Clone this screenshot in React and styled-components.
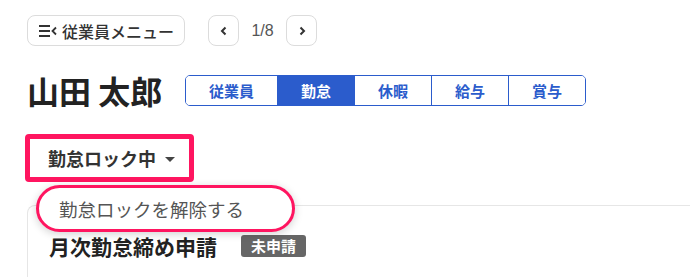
import React from 'react'
import styled, { createGlobalStyle } from 'styled-components'

const GlobalStyle = createGlobalStyle`
  body {
    margin: 0;
    background: #fff;
    font-family: "Noto Sans CJK JP", "Noto Sans", sans-serif;
    color: #333;
  }
`

const Page = styled.div`
  width: 690px;
  height: 277px;
  overflow: hidden;
  padding: 15px 0 0 27px;
  box-sizing: border-box;
`

const TopBar = styled.div`
  display: flex;
  align-items: center;
`

const MenuButton = styled.button`
  display: flex;
  align-items: center;
  gap: 4px;
  height: 31px;
  width: 158px;
  padding: 0 0 0 10px;
  border: 1px solid #dcdcdc;
  border-radius: 8px;
  background: #fff;
  font-family: inherit;
  font-size: 16px;
  font-weight: 500;
  color: #333;
  box-sizing: border-box;
  white-space: nowrap;
`

const Pager = styled.div`
  display: flex;
  align-items: center;
  margin-left: 23px;
`

const PageButton = styled.button`
  width: 31px;
  height: 31px;
  display: flex;
  align-items: center;
  justify-content: center;
  border: 1px solid #dcdcdc;
  border-radius: 8px;
  background: #fff;
  padding: 0;
  box-sizing: border-box;
`

const PageCount = styled.span`
  width: 47px;
  text-align: center;
  font-family: "Liberation Sans", sans-serif;
  font-size: 16px;
  color: #555;
`

const NameRow = styled.div`
  display: flex;
  align-items: center;
  margin-top: 27px;
`

const Name = styled.h1`
  margin: 0;
  font-size: 32px;
  font-weight: 700;
  color: #222;
  width: 158px;
  line-height: 34px;
  white-space: nowrap;
`

const Tabs = styled.div`
  display: flex;
  border: 1px solid #2b5ccc;
  border-radius: 5px;
  overflow: hidden;
  height: 31px;
  box-sizing: border-box;
`

const Tab = styled.div`
  padding: 0 23px;
  display: flex;
  align-items: center;
  justify-content: center;
  font-size: 15px;
  font-weight: 700;
  color: ${p => (p.active ? '#fff' : '#2b5ccc')};
  background: ${p => (p.active ? '#2b5ccc' : '#fff')};
  border-left: ${p => (p.first ? 'none' : '1px solid #2b5ccc')};
`

const LockArea = styled.div`
  position: relative;
  margin-top: 27px;
  margin-left: -2px;
`

const LockButton = styled.button`
  display: flex;
  align-items: center;
  gap: 9px;
  width: 169px;
  height: 48px;
  padding: 0 0 0 18px;
  border: 5px solid #ff1560;
  border-radius: 4px;
  background: #fff;
  font-family: inherit;
  font-size: 18px;
  font-weight: 700;
  color: #333;
  box-sizing: border-box;
`

const Caret = styled.span`
  width: 0;
  height: 0;
  border-left: 5px solid transparent;
  border-right: 5px solid transparent;
  border-top: 5px solid #444;
  margin-top: 2px;
`

const Menu = styled.div`
  position: absolute;
  left: 11px;
  top: 51px;
  width: 259px;
  height: 47px;
  display: flex;
  align-items: center;
  padding-left: 20px;
  box-sizing: border-box;
  border: 3px solid #ff1560;
  border-radius: 24px;
  background: #fff;
  box-shadow: 0 2px 8px rgba(0, 0, 0, 0.18);
  font-size: 18.5px;
  color: #555;
  z-index: 2;
`

const Card = styled.div`
  margin-top: 23px;
  border-top: 1px solid #e6e6e6;
  border-left: 1px solid #e6e6e6;
  border-top-left-radius: 8px;
  height: 80px;
  padding: 25px 0 0 21px;
  box-sizing: border-box;
  display: flex;
  align-items: flex-start;
  gap: 24px;
`

const CardTitle = styled.h2`
  margin: 0;
  font-size: 21px;
  font-weight: 700;
  color: #222;
  line-height: 30px;
`

const Badge = styled.span`
  margin-top: 4px;
  padding: 0 10px;
  height: 22px;
  line-height: 22px;
  border-radius: 3px;
  background: #666;
  color: #fff;
  font-size: 15px;
  font-weight: 700;
`

const FoldIcon = () => (
  <svg width="20" height="14" viewBox="0 0 20 14" fill="none" stroke="#333" strokeWidth="2">
    <path d="M1 2h11M1 7h11M1 12h11" />
    <path d="M18 3.5L14.5 7l3.5 3.5" strokeWidth="1.8" />
  </svg>
)

const Chevron = ({ dir }) => (
  <svg width="10" height="10" viewBox="0 0 10 10" fill="none" stroke="#333" strokeWidth="2">
    <path d={dir === 'left' ? 'M6.5 1.5L3 5l3.5 3.5' : 'M3.5 1.5L7 5 3.5 8.5'} />
  </svg>
)

const tabs = ['従業員', '勤怠', '休暇', '給与', '賞与']

export default function App() {
  return (
    <>
      <GlobalStyle />
      <Page>
        <TopBar>
          <MenuButton>
            <FoldIcon />
            従業員メニュー
          </MenuButton>
          <Pager>
            <PageButton><Chevron dir="left" /></PageButton>
            <PageCount>1/8</PageCount>
            <PageButton><Chevron dir="right" /></PageButton>
          </Pager>
        </TopBar>
        <NameRow>
          <Name>山田 太郎</Name>
          <Tabs>
            {tabs.map((t, i) => (
              <Tab key={t} first={i === 0} active={t === '勤怠'}>{t}</Tab>
            ))}
          </Tabs>
        </NameRow>
        <LockArea>
          <LockButton>
            勤怠ロック中
            <Caret />
          </LockButton>
          <Menu>勤怠ロックを解除する</Menu>
        </LockArea>
        <Card>
          <CardTitle>月次勤怠締め申請</CardTitle>
          <Badge>未申請</Badge>
        </Card>
      </Page>
    </>
  )
}
